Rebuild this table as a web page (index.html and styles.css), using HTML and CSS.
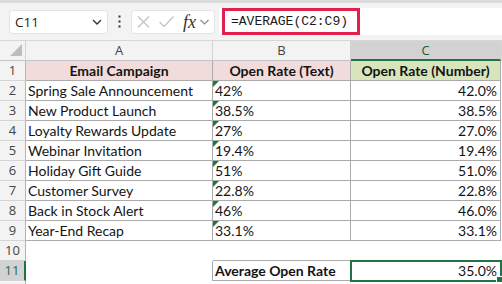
FILE: index.html
```html
<!DOCTYPE html>
<html>
<head>
<meta charset="utf-8">
<link rel="stylesheet" href="styles.css">
</head>
<body>
<div class="app">
  <div class="topstrip"></div>
  <div class="toolbar">
    <div class="namebox">
      <span>C11</span>
      <svg class="chev" width="10" height="6" viewBox="0 0 10 6"><path d="M1 1 L5 5 L9 1" fill="none" stroke="#333" stroke-width="1.3"/></svg>
    </div>
    <div class="dots">
      <svg width="3" height="13" viewBox="0 0 3 13"><rect x="0.5" y="0.5" width="2" height="2" fill="#333"/><rect x="0.5" y="5.5" width="2" height="2" fill="#333"/><rect x="0.5" y="10.5" width="2" height="2" fill="#333"/></svg>
    </div>
    <div class="fxbox">
      <svg width="13" height="12" viewBox="0 0 13 12"><path d="M1 0.5 L12 11.5 M12 0.5 L1 11.5" stroke="#c4c4c4" stroke-width="1.3" fill="none"/></svg>
      <svg width="15" height="11" viewBox="0 0 15 11"><path d="M0.5 6 L5 10.5 L14.5 0.5" stroke="#c4c4c4" stroke-width="1.3" fill="none"/></svg>
      <span class="fx">fx</span>
      <svg width="9" height="6" viewBox="0 0 9 6"><path d="M0.5 1 L4.5 5 L8.5 1" fill="none" stroke="#8a8a8a" stroke-width="1.2"/></svg>
    </div>
    <div class="formula"><span class="hl">=AVERAGE(C2:C9)</span></div>
  </div>
  <div class="sheet">
    <div class="corner"><svg width="12" height="12" viewBox="0 0 12 12"><path d="M12 0 L12 12 L0 12 Z" fill="#bdbdbd"/></svg></div>
    <div class="ch">A</div>
    <div class="ch">B</div>
    <div class="ch sel">C</div>
    <div class="ch"></div>

    <div class="rh">1</div>
    <div class="c head pink">Email Campaign</div>
    <div class="c head pink">Open Rate (Text)</div>
    <div class="c head green">Open Rate (Number)</div>
    <div class="e"></div>

    <div class="rh">2</div>
    <div class="c">Spring Sale Announcement</div>
    <div class="c txt">42%</div>
    <div class="c num">42.0%</div>
    <div class="e"></div>

    <div class="rh">3</div>
    <div class="c">New Product Launch</div>
    <div class="c txt">38.5%</div>
    <div class="c num">38.5%</div>
    <div class="e"></div>

    <div class="rh">4</div>
    <div class="c">Loyalty Rewards Update</div>
    <div class="c txt">27%</div>
    <div class="c num">27.0%</div>
    <div class="e"></div>

    <div class="rh">5</div>
    <div class="c">Webinar Invitation</div>
    <div class="c txt">19.4%</div>
    <div class="c num">19.4%</div>
    <div class="e"></div>

    <div class="rh">6</div>
    <div class="c">Holiday Gift Guide</div>
    <div class="c txt">51%</div>
    <div class="c num">51.0%</div>
    <div class="e"></div>

    <div class="rh">7</div>
    <div class="c">Customer Survey</div>
    <div class="c txt">22.8%</div>
    <div class="c num">22.8%</div>
    <div class="e"></div>

    <div class="rh">8</div>
    <div class="c">Back in Stock Alert</div>
    <div class="c txt">46%</div>
    <div class="c num">46.0%</div>
    <div class="e"></div>

    <div class="rh">9</div>
    <div class="c">Year-End Recap</div>
    <div class="c txt">33.1%</div>
    <div class="c num">33.1%</div>
    <div class="e"></div>

    <div class="rh">10</div>
    <div class="e"></div>
    <div class="e eb"></div>
    <div class="e"></div>
    <div class="e"></div>

    <div class="rh sel">11</div>
    <div class="e er"></div>
    <div class="c bold">Average Open Rate</div>
    <div class="c num active">35.0%</div>
    <div class="e"></div>

    <div class="rh"></div>
    <div class="e"></div>
    <div class="e"></div>
    <div class="e"></div>
    <div class="e"></div>
  </div>
</div>
</body>
</html>
```
FILE: styles.css
```css
html, body {
  margin: 0;
  padding: 0;
  background: #ffffff;
}

.app {
  width: 502px;
  height: 284px;
  overflow: hidden;
  font-family: "Lato", "Liberation Sans", sans-serif;
}

.topstrip {
  height: 3px;
  background: #dadada;
}

.toolbar {
  height: 37px;
  background: #f3f3f3;
  border-bottom: 1px solid #d6d6d6;
  display: flex;
  align-items: center;
  padding-left: 9px;
}

.namebox {
  width: 99px;
  height: 24px;
  box-sizing: border-box;
  background: #ffffff;
  border-radius: 4px;
  box-shadow: inset 0 0 0 1px #e4e4e4;
  display: flex;
  align-items: center;
  justify-content: space-between;
  padding: 0 6px 0 6px;
  font-family: "Open Sans", "Noto Sans", sans-serif;
  font-size: 13.5px;
  color: #1f1f1f;
}

.dots {
  width: 23px;
  display: flex;
  justify-content: center;
}

.dots svg {
  display: block;
}

.fxbox {
  width: 84px;
  height: 24px;
  box-sizing: border-box;
  background: #ffffff;
  border-radius: 4px;
  box-shadow: inset 0 0 0 1px #e4e4e4;
  display: flex;
  align-items: center;
  padding-left: 6px;
  gap: 9px;
}

.fxbox svg {
  display: block;
}

.fx {
  font-family: "Liberation Serif", "DejaVu Serif", serif;
  font-style: italic;
  font-size: 18px;
  color: #333333;
  margin-left: 0;
  margin-right: -5px;
  line-height: 18px;
}

.formula {
  flex: 1;
  height: 27px;
  background: #ffffff;
  margin-left: 4px;
  padding-left: 3px;
  display: flex;
}

.hl {
  width: 138px;
  height: 27px;
  box-sizing: border-box;
  border: 3px solid #e2204c;
  padding-left: 6px;
  font-family: "Liberation Mono", "DejaVu Sans Mono", monospace;
  font-size: 13px;
  line-height: 21px;
  color: #1a1a1a;
  white-space: nowrap;
}

.sheet {
  display: grid;
  grid-template-columns: 26px 187px 138px 150px 1fr;
  grid-auto-rows: 20px;
  font-size: 14px;
  color: #141414;
}

.sheet > div {
  box-sizing: border-box;
  white-space: nowrap;
  overflow: hidden;
}

.corner {
  background: #f3f3f3;
  border-right: 1px solid #d4d4d4;
  border-bottom: 1px solid #c4c4c4;
  display: flex;
  justify-content: flex-end;
  align-items: flex-end;
  padding: 0 3px 4px 0;
}

.corner svg {
  display: block;
}

.ch {
  background: #f3f3f3;
  border-right: 1px solid #d4d4d4;
  border-bottom: 1px solid #c4c4c4;
  text-align: center;
  font-family: "Open Sans", "Noto Sans", sans-serif;
  font-size: 13px;
  line-height: 19px;
  color: #444444;
}

.ch.sel {
  background: #d2d2d2;
  border-bottom: 2px solid #217346;
  color: #185c37;
  line-height: 18px;
}

.rh {
  background: #f3f3f3;
  border-right: 1px solid #b4b4b4;
  border-bottom: 1px solid #d4d4d4;
  text-align: center;
  font-family: "Open Sans", "Noto Sans", sans-serif;
  font-size: 13px;
  line-height: 19px;
  color: #444444;
}

.rh.sel {
  background: #d2d2d2;
  border-right: 2px solid #217346;
  color: #2a6b45;
}

.c {
  border-right: 1px solid #ababab;
  border-bottom: 1px solid #ababab;
  padding: 0 2px;
  line-height: 19px;
}

.head {
  font-weight: bold;
  text-align: center;
}

.pink {
  background: #f2dcdb;
}

.green {
  background: #d8e4bc;
}

.num {
  text-align: right;
  padding-right: 3px;
}

.bold {
  font-weight: bold;
}

.txt {
  position: relative;
}

.txt::before {
  content: "";
  position: absolute;
  left: 0;
  top: 0;
  border-top: 6px solid #1e7a43;
  border-right: 6px solid transparent;
}

.e {
  background: #ffffff;
}

.eb {
  border-bottom: 1px solid #ababab;
}

.er {
  border-right: 1px solid #ababab;
}

.sheet > .active {
  position: relative;
  overflow: visible;
  outline: 2px solid #217346;
  outline-offset: -1px;
}

.active::after {
  content: "";
  position: absolute;
  right: -3px;
  bottom: -3px;
  width: 5px;
  height: 5px;
  background: #217346;
  border: 1px solid #ffffff;
}
```
